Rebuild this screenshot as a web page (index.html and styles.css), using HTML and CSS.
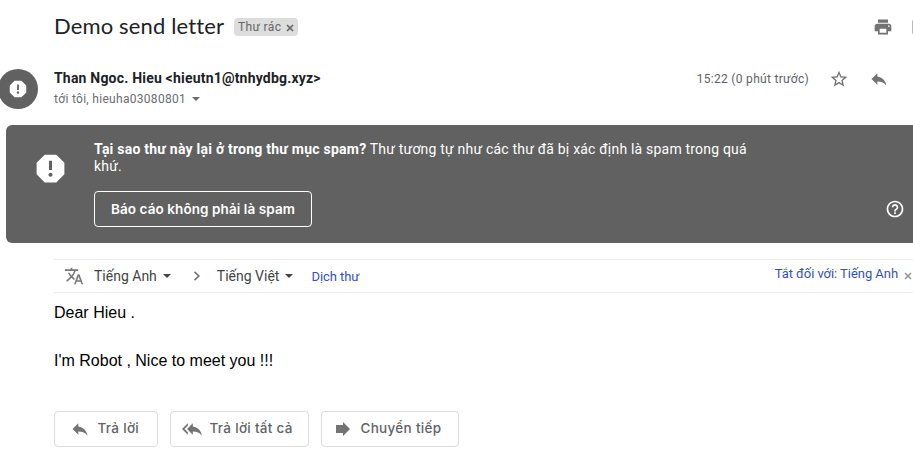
FILE: index.html
```html
<!DOCTYPE html>
<html lang="vi">
<head>
<meta charset="utf-8">
<title>Demo send letter</title>
<link rel="stylesheet" href="styles.css">
</head>
<body>
<svg class="defs" aria-hidden="true">
  <symbol id="reply" viewBox="0 0 24 24"><path d="M10 9V5l-7 7 7 7v-4.100c5 0 8.500 1.600 11 5.100-1-5-4-10-11-11z"/></symbol>
  <symbol id="reply-all" viewBox="0 0 24 24"><path d="M7 8V5l-7 7 7 7v-3l-4-4 4-4zm6 1V5l-7 7 7 7v-4.100c5 0 8.500 1.600 11 5.100-1-5-4-10-11-11z"/></symbol>
  <symbol id="report" viewBox="0 0 24 24"><path d="M15.730 3H8.270L3 8.270v7.460L8.270 21h7.460L21 15.730V8.270L15.730 3zM12 17.300c-.72 0-1.300-.58-1.300-1.300s.58-1.300 1.300-1.300 1.300.58 1.300 1.300-.58 1.300-1.300 1.300zm1-4.300h-2V7h2v6z"/></symbol>
  <symbol id="close" viewBox="0 0 8 8"><path d="M1 1l6 6M7 1L1 7" fill="none" stroke="currentColor" stroke-width="1.700"/></symbol>
</svg>
<main class="mail">
  <header class="subject">
    <h1>Demo send letter</h1>
    <span class="label"><span class="label-text">Thư rác</span><svg class="x"><use href="#close"/></svg></span>
    <svg class="icon print" viewBox="0 0 24 24"><path d="M19 8H5c-1.660 0-3 1.340-3 3v6h4v4h12v-4h4v-6c0-1.660-1.340-3-3-3zm-3 11H8v-5h8v5zm3-7c-.55 0-1-.45-1-1s.45-1 1-1 1 .45 1 1-.45 1-1 1zm-1-9H6v4h12V3z"/></svg>
    <svg class="icon window" viewBox="0 0 24 24"><path d="M19 19H5V5h7V3H5c-1.110 0-2 .9-2 2v14c0 1.100.89 2 2 2h14c1.100 0 2-.9 2-2v-7h-2v7zM14 3v2h3.590l-9.830 9.830 1.410 1.410L19 6.410V10h2V3h-7z"/></svg>
  </header>
  <section class="sender">
    <div class="avatar"><svg><use href="#report"/></svg></div>
    <div class="who">
      <div class="name">Than Ngoc. Hieu &lt;hieutn1@tnhydbg.xyz&gt;</div>
      <div class="to"><span class="to-text">tới tôi, hieuha03080801</span><i class="caret"></i></div>
    </div>
    <div class="meta">
      <span class="time">15:22 (0 phút trước)</span>
      <svg class="icon star" viewBox="0 0 24 24"><path d="M22 9.240l-7.190-.62L12 2 9.190 8.630 2 9.240l5.460 4.730L5.820 21 12 17.270 18.180 21l-1.630-7.030L22 9.240zM12 15.400l-3.760 2.270 1-4.280-3.320-2.880 4.380-.38L12 6.100l1.710 4.040 4.380.38-3.320 2.880 1 4.280L12 15.400z"/></svg>
      <svg class="icon"><use href="#reply"/></svg>
    </div>
  </section>
  <section class="banner">
    <svg class="warn"><use href="#report"/></svg>
    <div class="reason">
      <p><b>Tại sao thư này lại ở trong thư mục spam?</b> Thư tương tự như các thư đã bị xác định là spam trong quá khứ.</p>
      <button class="not-spam"><span>Báo cáo không phải là spam</span></button>
    </div>
    <svg class="help" viewBox="0 0 24 24"><path d="M11 18h2v-2h-2v2zm1-16C6.480 2 2 6.480 2 12s4.480 10 10 10 10-4.480 10-10S17.520 2 12 2zm0 18c-4.410 0-8-3.590-8-8s3.590-8 8-8 8 3.590 8 8-3.590 8-8 8zm0-14c-2.210 0-4 1.790-4 4h2c0-1.100.9-2 2-2s2 .9 2 2c0 2-3 1.750-3 5h2c0-2.250 3-2.500 3-5 0-2.210-1.790-4-4-4z"/></svg>
  </section>
  <section class="translate">
    <svg class="lang-icon" viewBox="0 0 24 24"><path d="M12.870 15.070l-2.540-2.510.03-.03c1.740-1.940 2.980-4.170 3.710-6.530H17V4h-7V2H8v2H1v1.990h11.170C11.500 7.920 10.440 9.750 9 11.350 8.070 10.320 7.300 9.190 6.690 8h-2c.73 1.630 1.730 3.170 2.980 4.560l-5.090 5.020L4 19l5-5 3.110 3.110.76-2.040zM18.500 10h-2L12 22h2l1.120-3h4.750L21 22h2l-4.500-12zm-2.620 7l1.620-4.330L19.120 17h-3.240z"/></svg>
    <span class="lang from">Tiếng Anh</span><i class="caret dark"></i>
    <svg class="chevron" viewBox="0 0 8 10"><path d="M1.500 .8L5.800 5 1.500 9.200"/></svg>
    <span class="lang into">Tiếng Việt</span><i class="caret dark"></i>
    <a class="do">Dịch thư</a>
    <a class="off">Tắt đối với: Tiếng Anh</a>
    <svg class="x off-x"><use href="#close"/></svg>
  </section>
  <article class="body">
    <p>Dear Hieu .</p>
    <p>I'm Robot , Nice to meet you !!!</p>
  </article>
  <footer class="actions">
    <button class="r1"><svg><use href="#reply"/></svg><span>Trả lời</span></button>
    <button class="r2"><svg><use href="#reply-all"/></svg><span>Trả lời tất cả</span></button>
    <button class="r3"><svg viewBox="0 0 20 20"><path d="M3 6h7V3l7 7-7 7v-3H3z"/></svg><span>Chuyển tiếp</span></button>
  </footer>
</main>
</body>
</html>
```
FILE: styles.css
```css
* { box-sizing: border-box; }
body { margin: 0; background: #fff; overflow: hidden; font-family: Roboto, "Liberation Sans", sans-serif; }
h1, p { margin: 0; }
svg { display: block; flex: none; fill: currentColor; }
span, a, .name { white-space: nowrap; }
button { background: none; font-family: Inter, "Open Sans", sans-serif; font-weight: 500; padding: 0; display: flex; align-items: center; }
.defs { width: 0; height: 0; position: absolute; }
.mail { width: 913px; height: 454px; overflow: hidden; }
.icon { width: 20px; height: 20px; color: #737373; }
.x { width: 8px; height: 8px; }

.subject { display: flex; align-items: center; height: 54px; padding-left: 54px; }
h1 { width: 180px; margin-top: -2px; font: 400 22px/28px Lato, sans-serif; letter-spacing: .14px; color: #202124; white-space: nowrap; }
.label { display: flex; align-items: center; width: 64px; height: 18px; padding-left: 4px; border-radius: 4px; background: #ddd; color: #666; font-size: 12px; letter-spacing: .35px; }
.label-text { width: 48px; }
.label .x { margin-top: 1px; }
.print { margin-left: auto; }
.window { margin: 0 -17px 0 17px; }

.sender { display: flex; height: 71px; }
.avatar { display: flex; align-items: center; justify-content: center; width: 40px; height: 40px; margin: 15px 16px 0 -2px; border-radius: 50%; background: #616161; color: #fff; }
.avatar svg { width: 22px; height: 22px; }
.who { padding-top: 14px; }
.name { font-size: 14px; font-weight: 700; line-height: 20px; letter-spacing: .2px; color: #202124; }
.to { display: flex; align-items: center; height: 21px; font-size: 12px; letter-spacing: .3px; color: #6a6d70; }
.caret { width: 0; height: 0; margin-left: 6px; border: 4px solid transparent; border-top-color: currentColor; border-bottom: 0; }
.meta { display: flex; align-items: center; height: 20px; margin: 15px 24px 0 auto; gap: 20px; color: #5f6368; font-size: 12px; letter-spacing: .3px; }

.banner { display: flex; height: 118px; margin-left: 6px; border-radius: 6px 0 0 6px; background: #616161; color: #fff; }
.warn { width: 37px; height: 37px; margin: 25px 25px 0 26px; }
.reason { width: 670px; padding-top: 16px; font-size: 14px; line-height: 17px; letter-spacing: .2px; }
.reason b { font-weight: 700; letter-spacing: .24px; }
.not-spam { width: 218px; height: 36px; margin-top: 16px; border: 1px solid #fff; border-radius: 4px; color: #fff; font-size: 13.500px; font-weight: 600; letter-spacing: .08px; justify-content: center; }
.help { width: 20px; height: 20px; margin: 74px 8px 0 auto; }

.translate { display: flex; align-items: center; height: 34px; margin: 16px 0 0 54px; border-top: 1px solid #ebebeb; border-bottom: 1px solid #ebebeb; color: #444; font-size: 14px; }
.lang-icon { width: 20px; height: 20px; margin: 0 10px; color: #777; }
.chevron { width: 8px; height: 10px; margin: 0 16px 0 22px; fill: none; stroke: #777; stroke-width: 1.700; }
.translate .caret { margin-left: 6px; }
.do, .off { color: #3450c4; font-size: 13px; letter-spacing: -.05px; }
.do { margin-left: 18px; }
.off { margin: -5px 6px 0 auto; }
.off-x { margin-right: 1px; color: #999; }

.body { height: 118px; padding: 8px 0 0 54px; font: 16px/24px "Liberation Sans", sans-serif; color: #000; }
.body p + p { margin-top: 24px; }

.actions { display: flex; gap: 12px; padding-left: 54px; }
.actions button { height: 36px; border: 1px solid #dadce0; border-radius: 4px; color: #5f6368; font-size: 13.500px; letter-spacing: .3px; }
.actions svg { width: 20px; height: 20px; color: #737373; }
.actions span { margin: -2px 0 0 7.500px; }
.r1 { width: 104px; padding-left: 15px; }
.r2 { width: 139px; padding-left: 11px; }
.r3 { width: 138px; padding-left: 11px; }
```
